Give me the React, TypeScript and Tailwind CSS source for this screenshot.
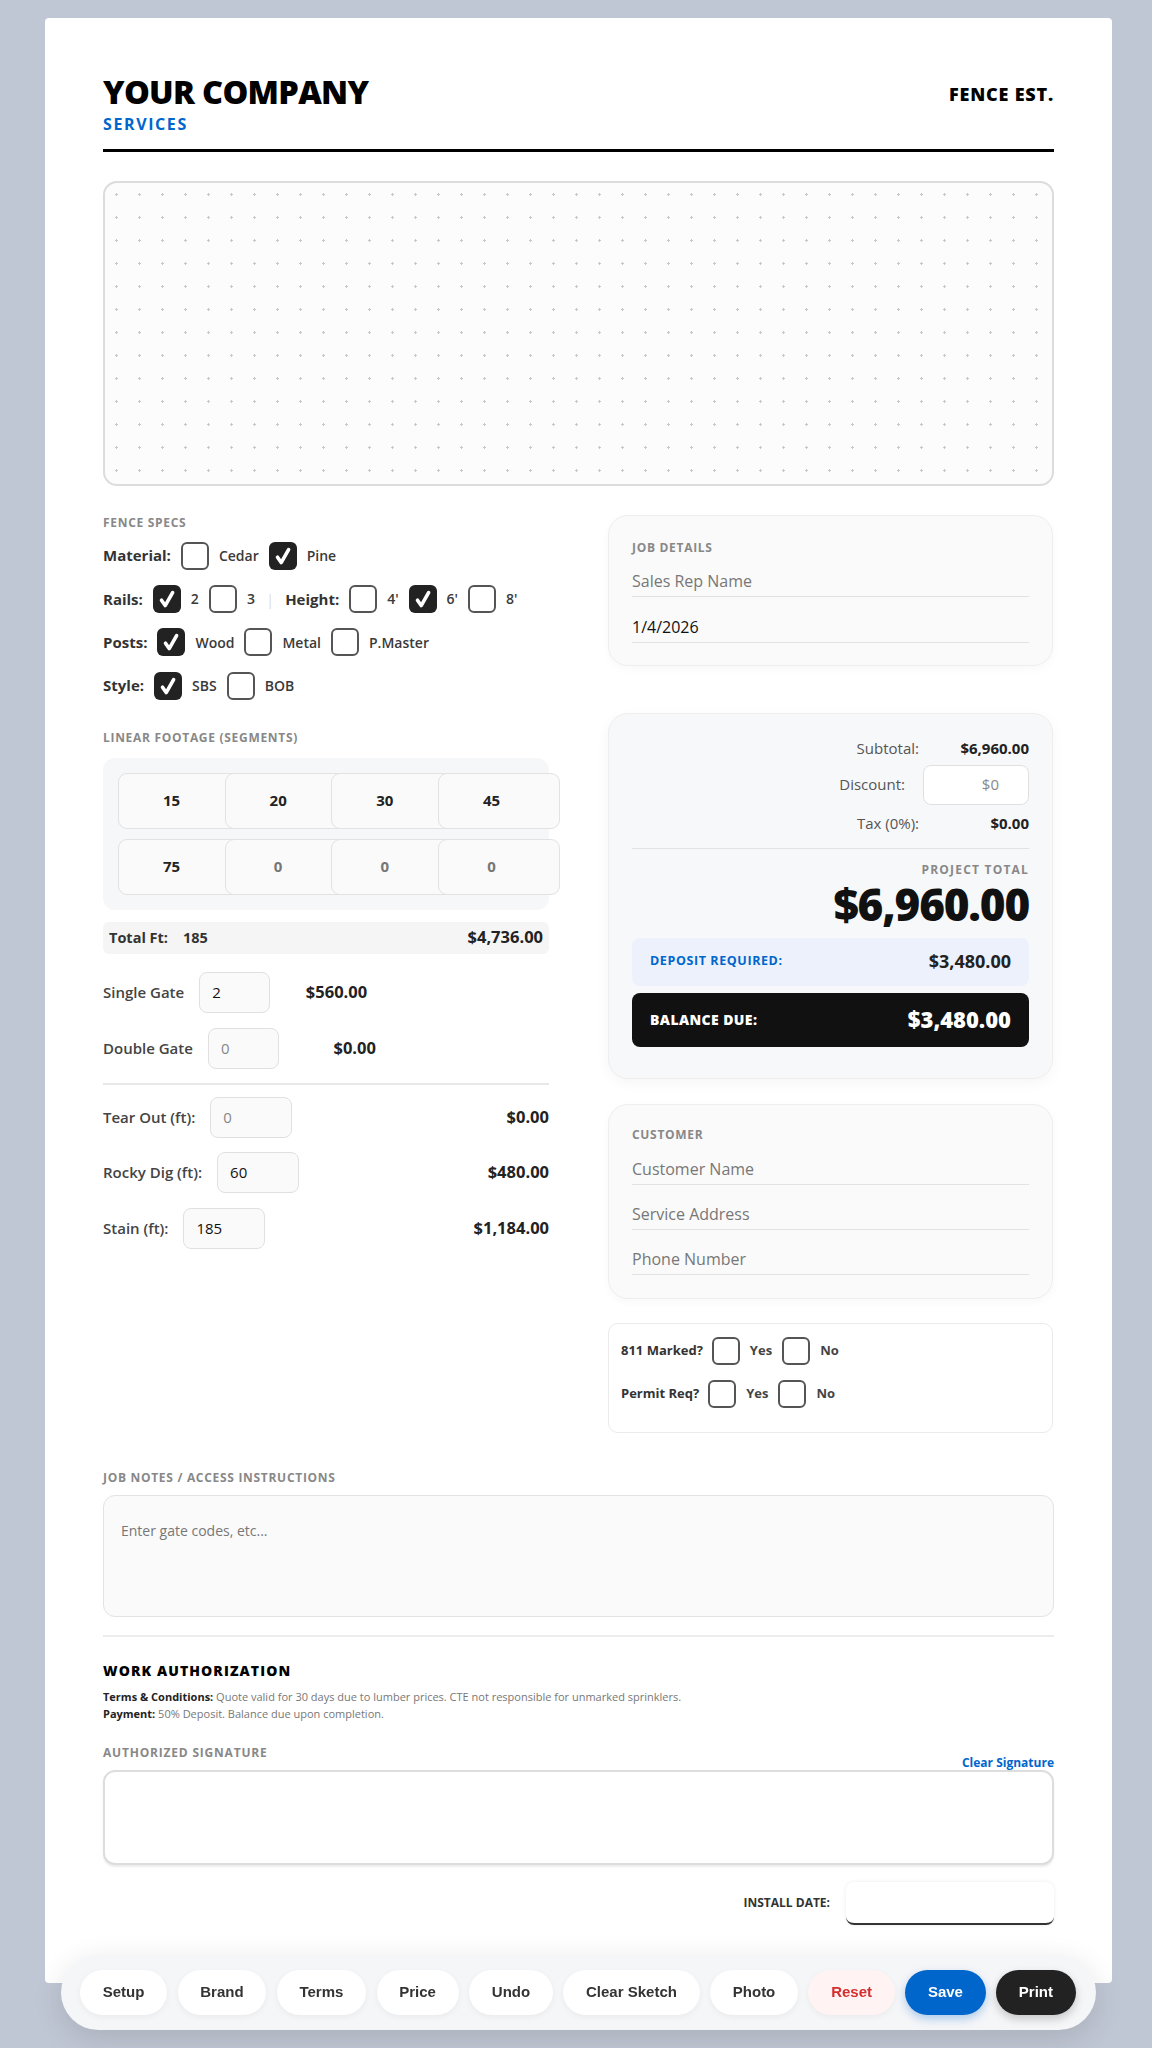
import React from "react";

const FONT = { fontFamily: '"Open Sans", "Noto Sans", sans-serif' };
const BTNFONT = { fontFamily: '"Liberation Sans", Arial, sans-serif' };

function Box({ checked }: { checked?: boolean }) {
  if (checked) {
    return (
      <span className="w-[28px] h-[28px] shrink-0 rounded-[6px] bg-[#222] flex items-center justify-center">
        <svg width="28" height="28" viewBox="0 0 28 28">
          <path d="M8.5 15.2 L12.2 20.6 L19.6 7.6" fill="none" stroke="#fff" strokeWidth="3.6" strokeLinecap="round" strokeLinejoin="round" />
        </svg>
      </span>
    );
  }
  return <span className="w-[28px] h-[28px] shrink-0 rounded-[6px] border-2 border-[#555] bg-white" />;
}

function Opt({ checked, label }: { checked?: boolean; label: string }) {
  return (
    <>
      <Box checked={checked} />
      <span className="text-[14px] font-semibold text-[#3a3a3a]">{label}</span>
    </>
  );
}

function SectionLabel({ children }: { children: React.ReactNode }) {
  return <div className="text-[12px] font-bold tracking-[0.7px] text-[#888] leading-[16px] uppercase">{children}</div>;
}

function LineInput({ value, placeholder, mt }: { value?: string; placeholder: string; mt: string }) {
  return (
    <div className={`h-[30px] border-b-[1.5px] border-[#e2e2e2] flex items-center text-[16px] ${mt} ${value ? "text-[#111]" : "text-[#777]"}`}>
      {value ?? placeholder}
    </div>
  );
}

export default function App() {
  const segs = ["15", "20", "30", "45", "75", "0", "0", "0"];
  return (
    <div className="min-h-[2048px] bg-[#c0c7d4] pt-[18px] pb-[65px]" style={FONT}>
      <div className="ml-[45px] w-[1067px] bg-white rounded-[4px] px-[58px] pt-[58px] pb-[58px] text-[#222]">
        {/* Header */}
        <div className="flex justify-between items-start border-b-[3px] border-black pb-[17px]">
          <div>
            <div className="text-[32.5px] font-extrabold leading-none tracking-[-0.7px] text-black">YOUR COMPANY</div>
            <div className="text-[16px] font-bold leading-none tracking-[1.6px] text-[#0066cc] mt-[7px]">SERVICES</div>
          </div>
          <div className="text-[18px] font-extrabold leading-none tracking-[0.8px] text-black mt-[9px]">FENCE EST.</div>
        </div>

        {/* Sketch */}
        <div className="mt-[29px] h-[305px] rounded-[14px] border-2 border-[#dcdcdc] bg-[#fcfcfc] bg-[radial-gradient(circle,#c8c8c8_1px,transparent_1.3px)] bg-[length:23px_23px]" />

        {/* Two columns */}
        <div className="mt-[29px] grid grid-cols-[446px_445px] gap-x-[59px] items-start">
          {/* Left */}
          <div>
            <SectionLabel>Fence Specs</SectionLabel>
            <div className="mt-[11px] flex flex-col gap-[15.4px]">
              <div className="flex items-center gap-[10px] h-[28px]">
                <span className="text-[15px] font-bold text-[#333]">Material:</span>
                <Opt label="Cedar" />
                <Opt checked label="Pine" />
              </div>
              <div className="flex items-center gap-[10px] h-[28px]">
                <span className="text-[15px] font-bold text-[#333]">Rails:</span>
                <Opt checked label="2" />
                <Opt label="3" />
                <span className="text-[15px] text-[#ddd] mx-[1px]">|</span>
                <span className="text-[15px] font-bold text-[#333]">Height:</span>
                <Opt label="4'" />
                <Opt checked label="6'" />
                <Opt label="8'" />
              </div>
              <div className="flex items-center gap-[10px] h-[28px]">
                <span className="text-[15px] font-bold text-[#333]">Posts:</span>
                <Opt checked label="Wood" />
                <Opt label="Metal" />
                <Opt label="P.Master" />
              </div>
              <div className="flex items-center gap-[10px] h-[28px]">
                <span className="text-[15px] font-bold text-[#333]">Style:</span>
                <Opt checked label="SBS" />
                <Opt label="BOB" />
              </div>
            </div>

            <div className="mt-[30px]">
              <SectionLabel>Linear Footage (Segments)</SectionLabel>
            </div>
            <div className="mt-[12px] rounded-[12px] bg-[#f6f7f9] p-[15px]">
              <div className="grid grid-cols-[repeat(4,106.67px)] gap-y-[10px]">
                {segs.map((s, i) => (
                  <div
                    key={i}
                    className={`w-[122px] h-[56px] rounded-[9px] border border-[#e2e2e2] bg-[#fafafa] flex items-center justify-center pr-[15px] text-[15px] font-bold ${i < 5 ? "text-[#222]" : "text-[#777]"}`}
                  >
                    {s}
                  </div>
                ))}
              </div>
            </div>

            <div className="mt-[12px] h-[32px] rounded-[6px] bg-[#f5f5f5] flex items-center px-[6px] text-[#333]">
              <span className="text-[14.5px] font-bold">Total Ft:</span>
              <span className="text-[14.5px] font-bold ml-[15px]">185</span>
              <span className="ml-auto text-[16.5px] font-bold text-[#222]">$4,736.00</span>
            </div>

            <div className="mt-[18px] flex items-center">
              <span className="text-[15px] font-semibold text-[#444]">Single Gate</span>
              <div className="ml-[15px] w-[71px] h-[41px] rounded-[8px] border border-[#e0e0e0] bg-[#fafafa] flex items-center pl-[12px] text-[15px] text-[#111]">2</div>
              <span className="ml-[16px] w-[81px] text-right text-[16.5px] font-bold text-[#222]">$560.00</span>
            </div>
            <div className="mt-[15px] flex items-center">
              <span className="text-[15px] font-semibold text-[#444]">Double Gate</span>
              <div className="ml-[15px] w-[71px] h-[41px] rounded-[8px] border border-[#e0e0e0] bg-[#fafafa] flex items-center pl-[12px] text-[15px] text-[#888]">0</div>
              <span className="ml-[16px] w-[81px] text-right text-[16.5px] font-bold text-[#222]">$0.00</span>
            </div>

            <div className="mt-[14px] h-[2px] bg-[#e8e8e8]" />

            <div className="mt-[12px] flex items-center">
              <span className="text-[15px] font-semibold text-[#444]">Tear Out (ft):</span>
              <div className="ml-[15px] w-[82px] h-[41px] rounded-[8px] border border-[#e0e0e0] bg-[#fafafa] flex items-center pl-[12px] text-[15px] text-[#888]">0</div>
              <span className="ml-auto text-[16.5px] font-bold text-[#222]">$0.00</span>
            </div>
            <div className="mt-[14px] flex items-center">
              <span className="text-[15px] font-semibold text-[#444]">Rocky Dig (ft):</span>
              <div className="ml-[15px] w-[82px] h-[41px] rounded-[8px] border border-[#e0e0e0] bg-[#fafafa] flex items-center pl-[12px] text-[15px] text-[#111]">60</div>
              <span className="ml-auto text-[16.5px] font-bold text-[#222]">$480.00</span>
            </div>
            <div className="mt-[15px] flex items-center">
              <span className="text-[15px] font-semibold text-[#444]">Stain (ft):</span>
              <div className="ml-[15px] w-[82px] h-[41px] rounded-[8px] border border-[#e0e0e0] bg-[#fafafa] flex items-center pl-[12px] text-[15px] text-[#111]">185</div>
              <span className="ml-auto text-[16.5px] font-bold text-[#222]">$1,184.00</span>
            </div>
          </div>

          {/* Right */}
          <div>
            <div className="h-[151px] rounded-[20px] border border-[#eeeeee] bg-[#fafafa] shadow-[0_3px_10px_rgba(0,0,0,0.03)] px-[23px] pt-[24px]">
              <SectionLabel>Job Details</SectionLabel>
              <LineInput placeholder="Sales Rep Name" mt="mt-[11px]" />
              <LineInput value="1/4/2026" placeholder="" mt="mt-[16px]" />
            </div>

            <div className="mt-[47px] h-[366px] rounded-[20px] border border-[#eeeeee] bg-[#f7f8fa] shadow-[0_4px_14px_rgba(0,0,0,0.04)] px-[23px] pt-[23px]">
              <div className="h-[24px] flex items-center justify-end">
                <span className="text-[15px] text-[#555]">Subtotal:</span>
                <span className="w-[110px] text-right text-[15px] font-bold text-[#222]">$6,960.00</span>
              </div>
              <div className="mt-[4px] flex items-center justify-end">
                <span className="text-[15px] text-[#555]">Discount:</span>
                <div className="ml-[18px] w-[106px] h-[40px] rounded-[8px] border border-[#e0e0e0] bg-white flex items-center justify-end pr-[29px] text-[15px] text-[#888]">$0</div>
              </div>
              <div className="mt-[7px] h-[24px] flex items-center justify-end">
                <span className="text-[15px] text-[#555]">Tax (0%):</span>
                <span className="w-[110px] text-right text-[15px] font-bold text-[#222]">$0.00</span>
              </div>
              <div className="mt-[12px] h-[1.5px] bg-[#e2e2e2]" />
              <div className="mt-[13px] text-right text-[12px] font-bold tracking-[1.2px] leading-[16px] text-[#888]">PROJECT TOTAL</div>
              <div className="mt-[3px] text-right text-[44px] font-extrabold leading-[46px] tracking-[-1.2px] text-[#111]">$6,960.00</div>
              <div className="mt-[10.5px] h-[48px] rounded-[8px] bg-[#ecf1fc] flex items-center justify-between px-[18px]">
                <span className="text-[12.5px] font-bold tracking-[0.6px] text-[#0066cc]">DEPOSIT REQUIRED:</span>
                <span className="text-[18px] font-bold text-[#222]">$3,480.00</span>
              </div>
              <div className="mt-[7px] h-[54px] rounded-[8px] bg-[#111] flex items-center justify-between px-[18px]">
                <span className="text-[14px] font-extrabold tracking-[0.4px] text-white">BALANCE DUE:</span>
                <span className="text-[22px] font-extrabold text-white">$3,480.00</span>
              </div>
            </div>

            <div className="mt-[25px] h-[195px] rounded-[20px] border border-[#eeeeee] bg-[#fafafa] shadow-[0_3px_10px_rgba(0,0,0,0.03)] px-[23px] pt-[22px]">
              <SectionLabel>Customer</SectionLabel>
              <LineInput placeholder="Customer Name" mt="mt-[12px]" />
              <LineInput placeholder="Service Address" mt="mt-[15px]" />
              <LineInput placeholder="Phone Number" mt="mt-[15px]" />
            </div>

            <div className="mt-[24px] h-[110px] rounded-[10px] border border-[#ebebeb] bg-white px-[12px] pt-[13px]">
              <div className="flex items-center gap-[10px] h-[28px]">
                <span className="text-[13px] font-bold text-[#333] mr-[-1px]">811 Marked?</span>
                <Box />
                <span className="text-[13px] font-bold text-[#444]">Yes</span>
                <Box />
                <span className="text-[13px] font-bold text-[#444]">No</span>
              </div>
              <div className="mt-[15px] flex items-center gap-[10px] h-[28px]">
                <span className="text-[13px] font-bold text-[#333] mr-[-1px]">Permit Req?</span>
                <Box />
                <span className="text-[13px] font-bold text-[#444]">Yes</span>
                <Box />
                <span className="text-[13px] font-bold text-[#444]">No</span>
              </div>
            </div>
          </div>
        </div>

        {/* Notes */}
        <div className="mt-[37px]">
          <SectionLabel>Job Notes / Access Instructions</SectionLabel>
        </div>
        <div className="mt-[9px] h-[122px] rounded-[12px] border border-[#e3e3e3] bg-[#fafafa] px-[17px] pt-[25px] text-[14px] text-[#777] leading-[20px]">
          Enter gate codes, etc...
        </div>

        <div className="mt-[18px] h-[2px] bg-[#ececec]" />

        <div className="mt-[25px] text-[14px] font-extrabold tracking-[1.1px] leading-[18px] text-black">WORK AUTHORIZATION</div>
        <div className="mt-[8.5px] text-[11px] leading-[17px] text-[#777]">
          <div>
            <span className="font-bold text-[#222]">Terms &amp; Conditions:</span> Quote valid for 30 days due to lumber prices. CTE not responsible for unmarked sprinklers.
          </div>
          <div>
            <span className="font-bold text-[#222]">Payment:</span> 50% Deposit. Balance due upon completion.
          </div>
        </div>

        <div className="mt-[22.5px] h-[25px] flex justify-between">
          <div className="text-[12px] font-bold tracking-[0.8px] leading-[16px] text-[#888]">AUTHORIZED SIGNATURE</div>
          <div className="self-end text-[12px] font-bold leading-[14px] text-[#0066cc]">Clear Signature</div>
        </div>
        <div className="h-[95px] rounded-[12px] border-2 border-[#dddddd] bg-white shadow-[0_2px_2px_rgba(0,0,0,0.08)]" />

        <div className="mt-[17px] flex items-center justify-end gap-[16px]">
          <span className="text-[12px] font-bold text-[#333]">INSTALL DATE:</span>
          <div className="w-[208px] h-[43px] rounded-[8px] bg-white border-b-2 border-[#333] shadow-[0_0_4px_rgba(0,0,0,0.08)]" />
        </div>
      </div>

      {/* Toolbar */}
      <div
        className="fixed bottom-[18px] left-[61px] w-[1035px] h-[75px] rounded-full bg-[#f5f6f8] shadow-[0_8px_30px_rgba(0,0,0,0.12)] flex items-center gap-[10.5px] px-[19px]"
        style={BTNFONT}
      >
        {["Setup", "Brand", "Terms", "Price", "Undo", "Clear Sketch", "Photo"].map((t) => (
          <button key={t} className="shrink-0 whitespace-nowrap h-[45px] px-[22.7px] rounded-full bg-white text-[15px] font-bold text-[#333] shadow-[0_2px_6px_rgba(0,0,0,0.05)]">
            {t}
          </button>
        ))}
        <button className="shrink-0 whitespace-nowrap h-[45px] px-[22.7px] rounded-full bg-[#fff3f3] text-[15px] font-bold text-[#d32f2f] shadow-[0_2px_6px_rgba(0,0,0,0.05)]">Reset</button>
        <button className="shrink-0 whitespace-nowrap h-[45px] px-[22.7px] rounded-full bg-[#0066cc] text-[15px] font-bold text-white shadow-[0_4px_10px_rgba(0,102,204,0.3)]">Save</button>
        <button className="shrink-0 whitespace-nowrap h-[45px] px-[22.7px] rounded-full bg-[#222] text-[15px] font-bold text-white shadow-[0_4px_10px_rgba(0,0,0,0.2)]">Print</button>
      </div>
    </div>
  );
}
